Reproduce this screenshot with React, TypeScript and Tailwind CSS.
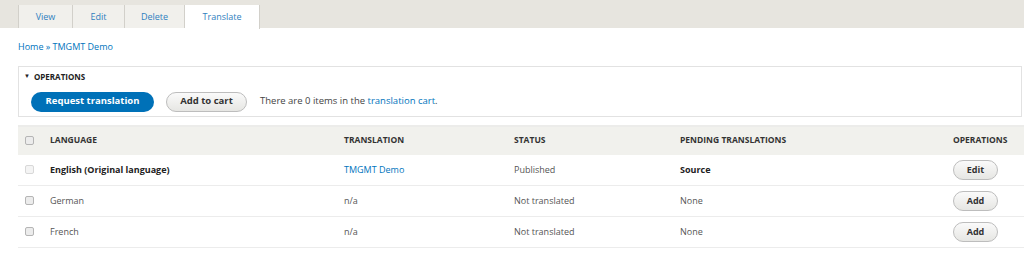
const tabs = ["View", "Edit", "Delete", "Translate"];

const rows = [
  {
    language: "English (Original language)",
    translation: "TMGMT Demo",
    status: "Published",
    pending: "Source",
    op: "Edit",
    original: true,
  },
  { language: "German", translation: "n/a", status: "Not translated", pending: "None", op: "Add", original: false },
  { language: "French", translation: "n/a", status: "Not translated", pending: "None", op: "Add", original: false },
];

function Checkbox({ faded }: { faded?: boolean }) {
  return (
    <span
      className={`block h-[9px] w-[9px] rounded-[2px] border ${
        faded ? "border-[#d8d8d8] bg-[#f4f4f4]" : "border-[#b5b5b5] bg-[#ececec]"
      }`}
    />
  );
}

function SmallButton({ label }: { label: string }) {
  return (
    <button
      type="button"
      className="flex h-[20px] w-[45px] items-center justify-center rounded-full border border-[#bdbdbd] bg-gradient-to-b from-[#fafafa] to-[#e6e6e3] text-[9px] font-bold text-[#333]"
    >
      {label}
    </button>
  );
}

export default function App() {
  return (
    <div className="h-[260px] w-[1024px] overflow-hidden bg-white font-['Open_Sans',sans-serif] text-[#333]">
      <div className="flex h-[28px] items-end bg-[#e7e5df] pl-[18px]">
        {tabs.map((t) => {
          const active = t === "Translate";
          return (
            <div
              key={t}
              className={`flex h-[23px] items-center justify-center border-r border-[#d2d0ca] text-[9px] text-[#2f7fc0] ${
                active
                  ? "mb-[-1px] h-[24px] w-[75px] bg-white"
                  : t === "View"
                    ? "w-[55px] border-l bg-[#f1f0ec]"
                    : t === "Edit"
                      ? "w-[52px] bg-[#f1f0ec]"
                      : "w-[60px] bg-[#f1f0ec]"
              }`}
            >
              {t}
            </div>
          );
        })}
      </div>

      <div className="px-[18px]">
        <div className="pt-[12px] text-[9px] text-[#0074bd]">Home » TMGMT Demo</div>

        <div className="mt-[12px] w-[1004px] border border-[#e2e2e2] pb-[4px]">
          <div className="flex items-center gap-[4px] pl-[5px] pt-[4px] text-[8px] font-bold text-[#222]">
            <span className="text-[6px]">▼</span>
            <span>OPERATIONS</span>
          </div>
          <div className="mt-[9px] flex items-center pl-[12px]">
            <button
              type="button"
              className="flex h-[20px] w-[123px] items-center justify-center rounded-full bg-[#0071b8] text-[9.5px] font-bold text-white"
            >
              Request translation
            </button>
            <button
              type="button"
              className="ml-[12px] flex h-[20px] w-[81px] items-center justify-center rounded-full border border-[#bdbdbd] bg-gradient-to-b from-[#fafafa] to-[#e6e6e3] text-[9.5px] font-bold text-[#333]"
            >
              Add to cart
            </button>
            <span className="ml-[13px] text-[9.5px] text-[#444]">
              There are 0 items in the <span className="text-[#0074bd]">translation cart</span>.
            </span>
          </div>
        </div>

        <div className="mt-[8px] w-[1006px]">
          <div className="grid h-[30px] grid-cols-[32px_294px_170px_166px_273px_1fr] items-center border-t-2 border-[#ececea] bg-[#f1f1ed] text-[8.5px] font-bold text-[#333]">
            <div className="pl-[7px]">
              <Checkbox />
            </div>
            <div>LANGUAGE</div>
            <div>TRANSLATION</div>
            <div>STATUS</div>
            <div>PENDING TRANSLATIONS</div>
            <div>OPERATIONS</div>
          </div>
          {rows.map((r) => (
            <div
              key={r.language}
              className="grid h-[31px] grid-cols-[32px_294px_170px_166px_273px_1fr] items-center border-b border-[#ececec] text-[9px] text-[#555]"
            >
              <div className="pl-[7px]">
                <Checkbox faded={r.original} />
              </div>
              <div className={r.original ? "font-bold text-[#222]" : ""}>{r.language}</div>
              <div className={r.original ? "text-[#0074bd]" : ""}>{r.translation}</div>
              <div>{r.status}</div>
              <div className={r.original ? "font-bold text-[#222]" : ""}>{r.pending}</div>
              <div>
                <SmallButton label={r.op} />
              </div>
            </div>
          ))}
        </div>
      </div>
    </div>
  );
}
